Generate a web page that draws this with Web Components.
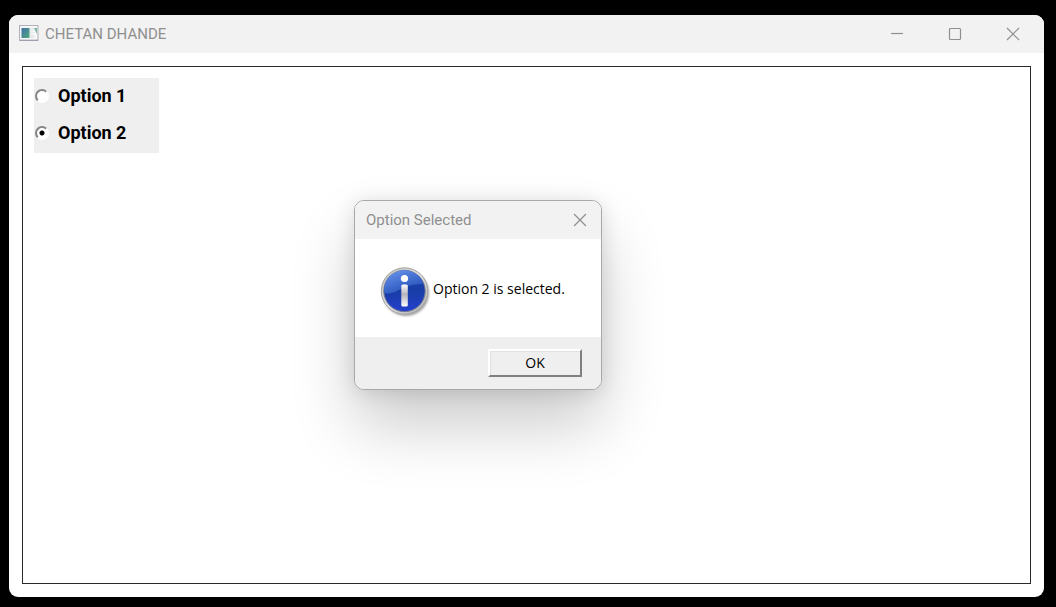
<!DOCTYPE html>
<html lang="en">
<head>
<meta charset="utf-8">
<title>CHETAN DHANDE</title>
<style>
  html { background: #000; }
  body {
    margin: 0;
    min-height: 100vh;
    box-sizing: border-box;
    padding: 15px 12px 10px 9px;
    display: flex;
    font-family: "Open Sans", "Noto Sans", sans-serif;
    --title: 400 15px/38px Roboto, "Open Sans", sans-serif;
    --bar: #f2f2f2;
    --face: #efefef;
    --muted: #8f8f8f;
  }
  app-window { flex: 1; }
  message-box { position: absolute; left: 345px; top: 185px; }
</style>
</head>
<body>
<app-window heading="CHETAN DHANDE">
  <option-group></option-group>
  <message-box slot="dialog" heading="Option Selected">Option 2 is selected.</message-box>
</app-window>

<template id="caption-button">
  <style>
    :host { display: flex; }
    button { display: flex; align-items: center; justify-content: center; width: 100%; padding: 0; border: 0; background: none; color: var(--muted); }
    svg { width: 14px; height: 14px; fill: none; stroke: currentColor; stroke-width: 1.2; }
  </style>
  <button type="button"><svg viewBox="0 0 14 14" aria-hidden="true"><path/></svg></button>
</template>

<template id="app-window">
  <style>
    :host { position: relative; display: flex; flex-direction: column; background: #fff; border-radius: 9px; }
    header { display: flex; height: 38px; padding-right: 2px; background: var(--bar); border-radius: 9px 9px 0 0; color: var(--muted); }
    .icon { width: 20px; height: 16px; margin: 10px 6px 0 10px; }
    h1 { flex: 1; margin: 0; font: var(--title); }
    caption-button { width: 58px; }
    main { flex: 1; margin: 13px; padding: 11px; border: 1px solid #2b2b2b; display: flex; align-items: flex-start; }
  </style>
  <header>
    <svg class="icon" viewBox="0 0 20 16" aria-hidden="true">
      <defs><linearGradient id="g" x1="0" y1="0" x2="1" y2="1"><stop offset="0" stop-color="#3e6fa6"/><stop offset="1" stop-color="#55aa80"/></linearGradient></defs>
      <rect x=".5" y=".5" width="18.5" height="15" fill="#f6f6f8" stroke="#aeb1bb"/>
      <path d="M1 15.2h18" stroke="#9698a4"/>
      <rect x="2.500" y="3" width="8" height="10" fill="url(#g)"/>
      <rect x="11" y="3" width="4" height="10" fill="#e7e9e9"/>
      <path d="M15 3h3v6z" fill="#78b5a0"/>
      <path d="M12 6h3M12 9h5" stroke="#fff"/>
    </svg>
    <h1></h1>
    <caption-button kind="minimize"></caption-button>
    <caption-button kind="maximize"></caption-button>
    <caption-button kind="close"></caption-button>
  </header>
  <main><slot></slot></main>
  <slot name="dialog"></slot>
</template>

<template id="option-group">
  <style>
    :host { display: block; width: 125px; padding-bottom: 1px; background: var(--face); }
    label { display: flex; align-items: center; gap: 9px; box-sizing: border-box; height: 37px; padding: 0 0 2px 1px; font: 700 18px/20px Roboto, sans-serif; color: #000; }
    input {
      appearance: none; box-sizing: border-box; width: 14px; height: 14px; margin: 0; border-radius: 50%;
      border: 2px solid; border-color: #858585 #fff #fff #858585; background: #fff;
    }
    input:checked { background: radial-gradient(circle, #000 2px, #fff 3px); }
  </style>
  <label><input type="radio" name="option"><span>Option 1</span></label>
  <label><input type="radio" name="option" checked><span>Option 2</span></label>
</template>

<template id="message-box">
  <style>
    :host {
      display: block; box-sizing: border-box; width: 248px; overflow: hidden;
      background: #fff; border: 1px solid #a8a8a8; border-radius: 10px;
      box-shadow: 0 36px 64px rgba(0, 0, 0, .2), 0 2px 20px rgba(0, 0, 0, .12);
    }
    header { display: flex; height: 38px; padding-left: 11px; background: var(--bar); color: var(--muted); }
    h2 { flex: 1; margin: 0; font: var(--title); }
    caption-button { width: 42px; }
    .body { display: flex; align-items: center; gap: 2px; box-sizing: border-box; height: 98px; padding: 2px 0 0 25px; }
    .body svg { width: 51px; height: 52px; flex: none; margin-top: 6px; }
    p { margin: 0; font-size: 14px; line-height: 20px; color: #000; white-space: nowrap; }
    footer { display: flex; justify-content: flex-end; padding: 12px 19px 12px 0; background: var(--face); }
    .ok {
      width: 94px; height: 28px; padding: 0; background: var(--face);
      border: 2px solid; border-color: #fff #808080 #808080 #fff;
      box-shadow: inset 1px 1px #e0e0e0;
      font: 400 14px/20px "Open Sans", "Noto Sans", sans-serif; color: #000;
    }
  </style>
  <header><h2></h2><caption-button kind="close"></caption-button></header>
  <div class="body">
    <svg viewBox="0 0 51 52" aria-hidden="true">
      <defs>
        <linearGradient id="ball" x1="0" y1="0" x2="0" y2="1"><stop offset="0" stop-color="#1c46ae"/><stop offset=".5" stop-color="#183da5"/><stop offset="1" stop-color="#2440cf"/></linearGradient>
        <linearGradient id="shine" x1="0" y1="0" x2=".6" y2="1"><stop offset="0" stop-color="#6c97ef"/><stop offset="1" stop-color="#2450b8"/></linearGradient>
        <linearGradient id="ring" x1="0" y1="0" x2="1" y2="1"><stop offset="0" stop-color="#b7b7b7"/><stop offset=".5" stop-color="#e2e2e2"/><stop offset="1" stop-color="#a9a9a9"/></linearGradient>
        <linearGradient id="stem" x1="0" y1="0" x2="0" y2="1"><stop offset="0" stop-color="#fff"/><stop offset=".45" stop-color="#b4b4bc"/><stop offset="1" stop-color="#fff"/></linearGradient>
        <filter id="soft"><feGaussianBlur stdDeviation="1"/></filter>
      </defs>
      <circle cx="26" cy="27" r="23" fill="#777" opacity=".7" filter="url(#soft)"/>
      <circle cx="24.500" cy="25" r="23.200" fill="url(#ring)" stroke="#a5a5a5"/>
      <circle cx="24.500" cy="25" r="20.700" fill="url(#ball)" stroke="#747c91"/>
      <path d="M4.300 27A20.200 20.200 0 0 1 43.500 18C32 18 26 20 19 24 14 27 9 28 4.300 27z" fill="url(#shine)"/>
      <circle cx="24.500" cy="12.500" r="3.600" fill="#fff"/>
      <rect x="21.300" y="18.500" width="6.500" height="22" rx="1.500" fill="url(#stem)"/>
    </svg>
    <p><slot></slot></p>
  </div>
  <footer><button type="button" class="ok">OK</button></footer>
</template>

<script>
  class TemplateElement extends HTMLElement {
    connectedCallback() {
      if (this.shadowRoot) return;
      const content = document.getElementById(this.localName).content.cloneNode(true);
      this.attachShadow({ mode: "open" }).append(content);
      this.ready();
    }
    ready() {
      const heading = this.shadowRoot.querySelector("h1, h2");
      if (heading) heading.textContent = this.getAttribute("heading");
    }
  }

  const glyphs = {
    minimize: "M1 6.500h12",
    maximize: "M2.500 1.500h9a1 1 0 0 1 1 1v9a1 1 0 0 1-1 1h-9a1 1 0 0 1-1-1v-9a1 1 0 0 1 1-1z",
    close: "M1 1l12 12M13 1L1 13"
  };

  customElements.define("caption-button", class extends TemplateElement {
    ready() {
      const kind = this.getAttribute("kind");
      this.shadowRoot.querySelector("path").setAttribute("d", glyphs[kind]);
      this.shadowRoot.querySelector("button").setAttribute("aria-label", kind);
    }
  });
  customElements.define("option-group", class extends TemplateElement {});
  customElements.define("message-box", class extends TemplateElement {});
  customElements.define("app-window", class extends TemplateElement {});
</script>
</body>
</html>
